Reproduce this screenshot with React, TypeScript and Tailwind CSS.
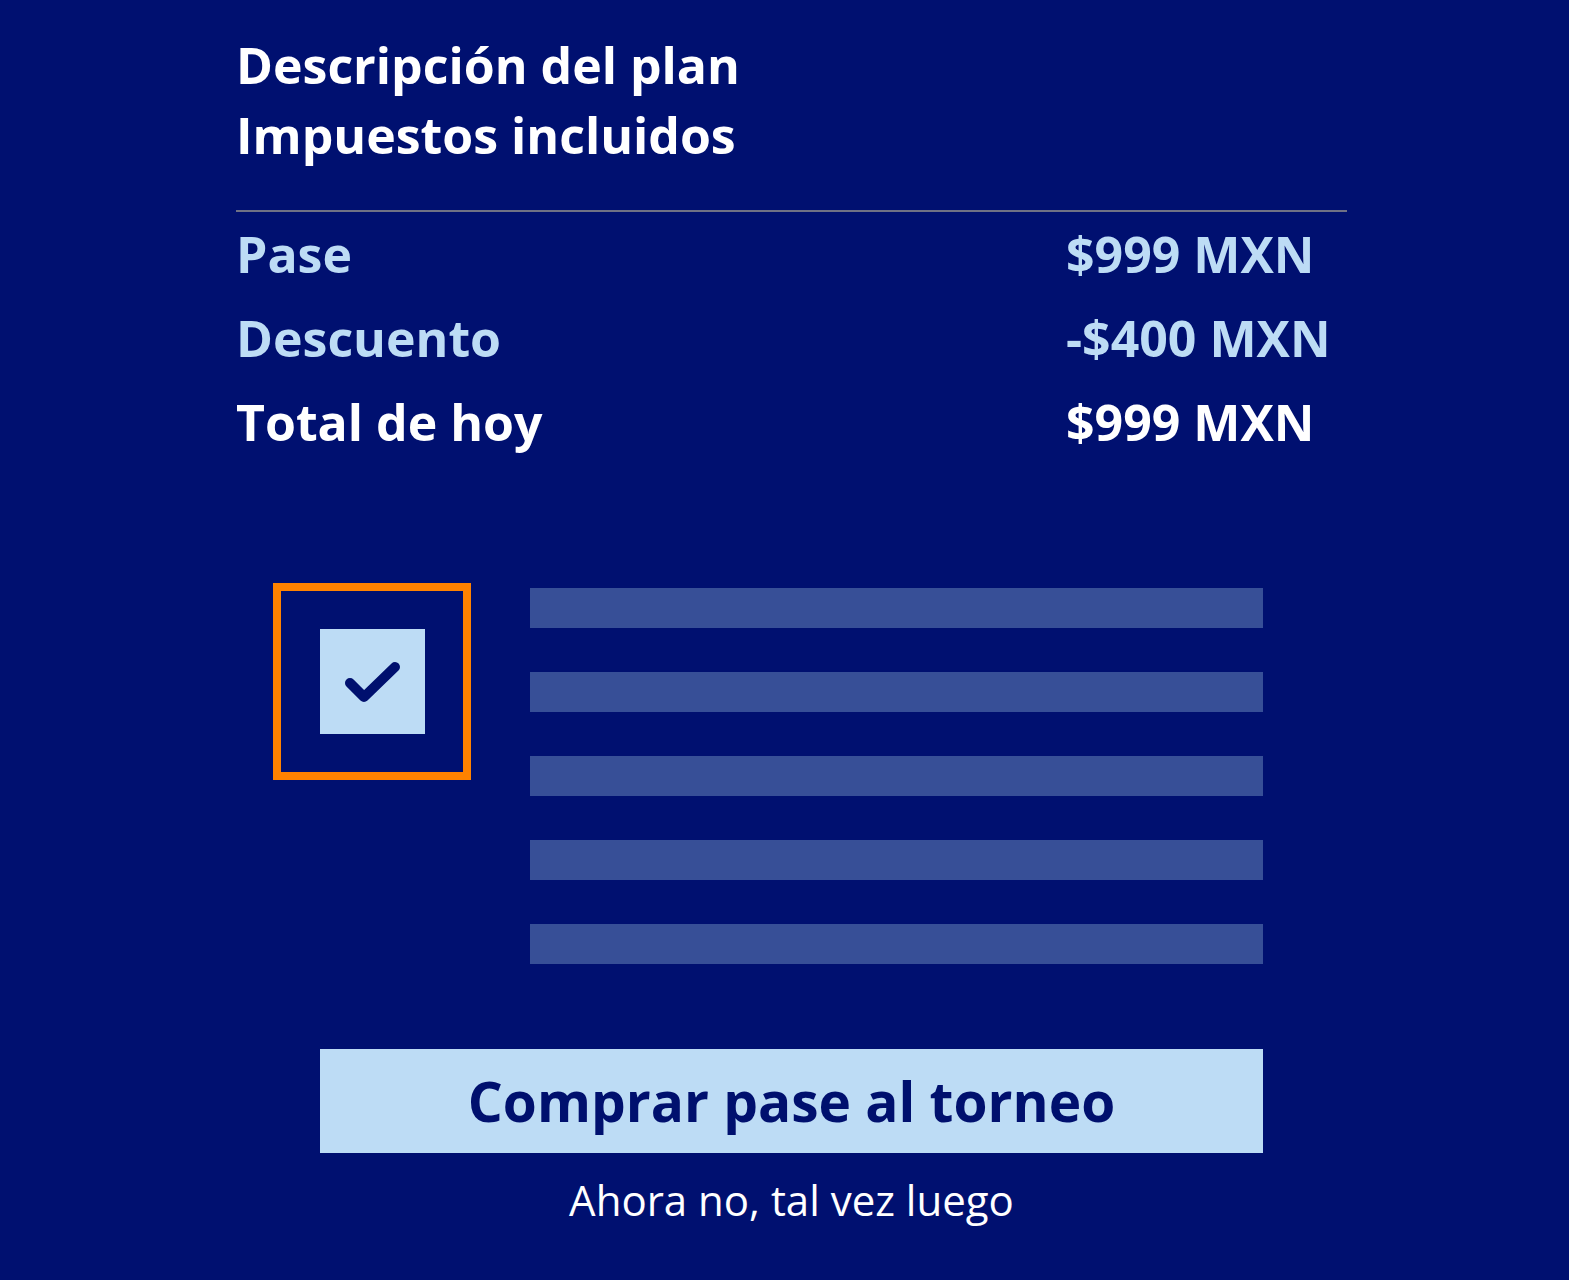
const rows = [
  { label: 'Pase', value: '$999 MXN', strong: false },
  { label: 'Descuento', value: '-$400 MXN', strong: false },
  { label: 'Total de hoy', value: '$999 MXN', strong: true },
];

function CheckTile() {
  return (
    <div className="ml-[37px] flex h-[197px] w-[198px] shrink-0 items-center justify-center border-[8px] border-[#ff8200]">
      <div className="h-[105px] w-[105px] bg-[#bddcf5]">
        <svg viewBox="0 0 105 105" className="h-full w-full">
          <path
            d="M30 54 L44 68 L75 38"
            fill="none"
            stroke="#00106e"
            strokeWidth="10"
            strokeLinecap="round"
            strokeLinejoin="round"
          />
        </svg>
      </div>
    </div>
  );
}

export default function App() {
  return (
    <div className="min-h-screen bg-[#001070] font-['Open_Sans',sans-serif]">
      <div className="ml-[236px] w-[1111px] pt-[30px]">
        <h1 className="text-[50px] font-bold leading-[70px] text-white">
          Descripción del plan
          <br />
          Impuestos incluidos
        </h1>

        <div className="mt-[40px] h-[2px] bg-[#6f7185]" />

        <div className="grid grid-cols-[830px_1fr] text-[50px] font-bold leading-[84px]">
          {rows.map((r) => (
            <div key={r.label} className="contents">
              <span className={r.strong ? 'text-white' : 'text-[#bddcf5]'}>{r.label}</span>
              <span className={r.strong ? 'text-white' : 'text-[#bddcf5]'}>{r.value}</span>
            </div>
          ))}
        </div>

        <div className="mt-[119px] flex items-start gap-[59px]">
          <CheckTile />
          <div className="flex w-[733px] flex-col gap-[44px] pt-[5px]">
            {[0, 1, 2, 3, 4].map((i) => (
              <div key={i} className="h-[40px] bg-[#374f97]" />
            ))}
          </div>
        </div>

        <button className="ml-[84px] mt-[85px] flex h-[104px] w-[943px] items-center justify-center bg-[#bddcf5] text-[55px] font-bold text-[#00106e]">
          Comprar pase al torneo
        </button>

        <p className="ml-[84px] mt-[22px] w-[943px] text-center text-[42px] leading-[50px] text-white">
          Ahora no, tal vez luego
        </p>
      </div>
    </div>
  );
}
